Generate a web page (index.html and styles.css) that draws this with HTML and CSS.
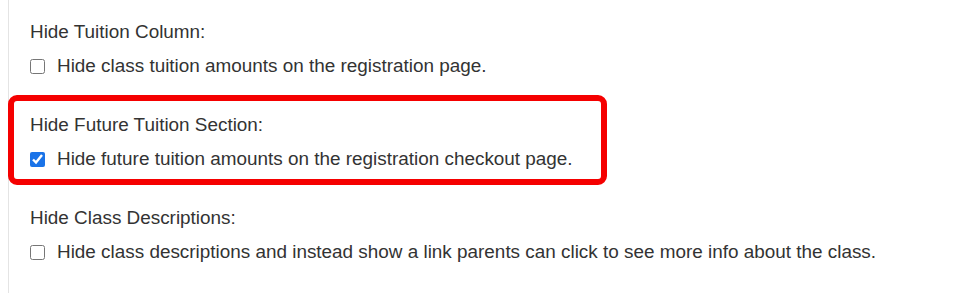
FILE: index.html
```html
<!DOCTYPE html>
<html>
<head>
<meta charset="utf-8">
<link rel="stylesheet" href="styles.css">
</head>
<body>
<div class="panel">
  <div class="group">
    <div class="label">Hide Tuition Column:</div>
    <label class="check"><input type="checkbox"><span>Hide class tuition amounts on the registration page.</span></label>
  </div>
  <div class="group highlight">
    <div class="label">Hide Future Tuition Section:</div>
    <label class="check"><input type="checkbox" checked><span>Hide future tuition amounts on the registration checkout page.</span></label>
  </div>
  <div class="group">
    <div class="label">Hide Class Descriptions:</div>
    <label class="check"><input type="checkbox"><span>Hide class descriptions and instead show a link parents can click to see more info about the class.</span></label>
  </div>
</div>
</body>
</html>
```
FILE: styles.css
```css
html, body {
  margin: 0;
  padding: 0;
  background: #fff;
}
body {
  font-family: "Liberation Sans", Arial, sans-serif;
  font-size: 18.9px;
  color: #333;
}
.panel {
  margin-left: 8px;
  border-left: 1px solid #e4e4e4;
  padding: 22px 0 0 21px;
  min-height: 271px;
}
.group {
  position: relative;
  margin-bottom: 39px;
}
.label {
  line-height: 20px;
  margin-bottom: 14px;
}
.check {
  display: flex;
  align-items: center;
  gap: 12px;
  line-height: 20px;
}
.check input {
  width: 15px;
  height: 15px;
  margin: 0;
  accent-color: #1a73e8;
}
.highlight::before {
  content: "";
  position: absolute;
  left: -22px;
  top: -20px;
  width: 599px;
  height: 90px;
  box-sizing: border-box;
  border: 6px solid #f50000;
  border-radius: 9px;
  pointer-events: none;
}
```
